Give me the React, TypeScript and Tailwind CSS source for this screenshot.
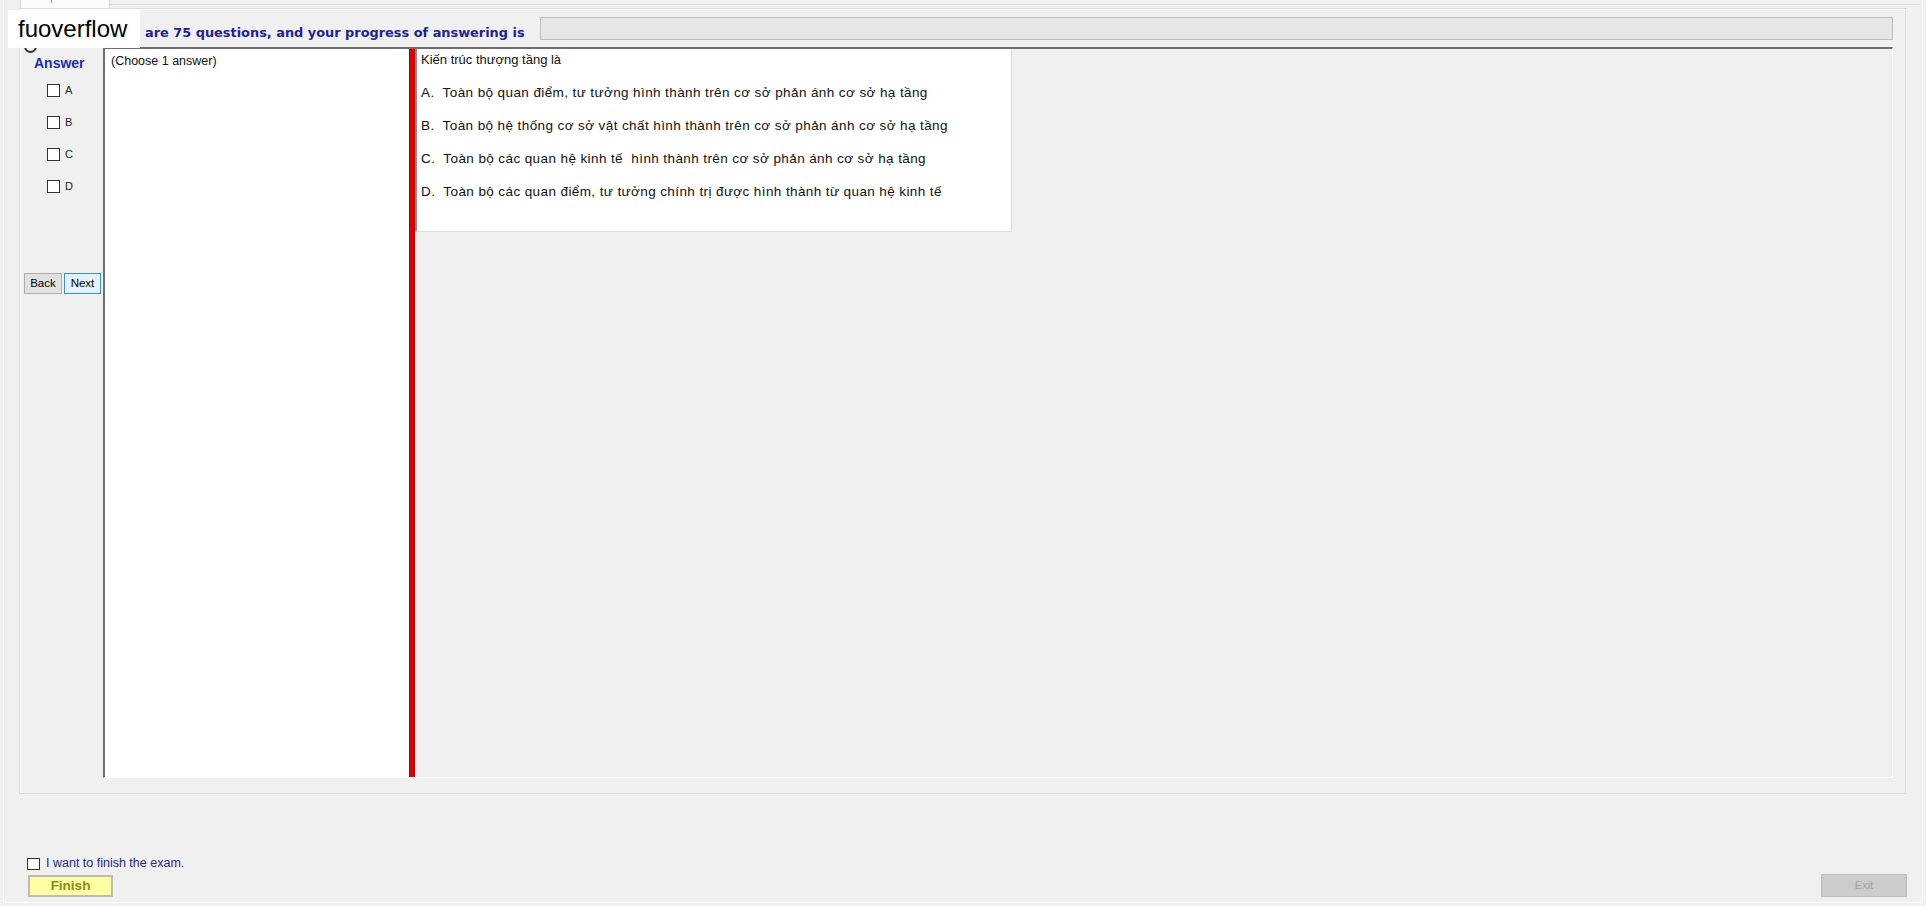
import React from 'react'

const options = [
  'A.  Toàn bộ quan điểm, tư tưởng hình thành trên cơ sở phản ánh cơ sở hạ tầng',
  'B.  Toàn bộ hệ thống cơ sở vật chất hình thành trên cơ sở phản ánh cơ sở hạ tầng',
  'C.  Toàn bộ các quan hệ kinh tế  hình thành trên cơ sở phản ánh cơ sở hạ tầng',
  'D.  Toàn bộ các quan điểm, tư tưởng chính trị được hình thành từ quan hệ kinh tế',
]

function Box() {
  return <span className="block h-[13px] w-[13px] border border-[#333333] bg-white" />
}

export default function App() {
  return (
    <div className="relative h-[906px] w-[1926px] overflow-hidden bg-[#f0f0f0] font-['Liberation_Sans',Arial,sans-serif] text-black">
      <div className="ml-[3px] flex h-[903px] w-[1920px] flex-col border-x border-b border-white">
        {/* tab strip */}
        <div className="flex h-[8px] pl-[16px]">
          <div className="relative h-full w-[90px] border-x border-[#d4d4d4] bg-[#fbfbfb]">
            <span className="absolute left-[30px] top-0 h-[3px] w-[1px] bg-[#9a9a9a]" />
          </div>
          <div className="h-[5px] flex-1 border-b border-[#dedede]" />
        </div>

        {/* tab page */}
        <div className="ml-[15px] flex h-[786px] w-[1887px] flex-col border border-[#dadada] shadow-[inset_1px_1px_0_#ffffff]">
          <div className="flex h-[38px] shrink-0">
            <div className="w-[125px]" />
            <div className="w-[395px] pt-[16px] font-['DejaVu_Sans',Verdana,sans-serif] text-[12.9px] font-bold leading-[15px] text-[#1f1f97]">
              are 75 questions, and your progress of answering is
            </div>
            <div className="mt-[8px] h-[23px] w-[1353px] border border-[#bcbcbc] bg-[#e6e6e6]" />
          </div>

          <div className="flex h-[731px] shrink-0">
            {/* answer column */}
            <div className="flex w-[83px] flex-col pt-[8px]">
              <div className="pl-[14px] text-[14px] font-bold leading-[16px] text-[#1a2db3]">Answer</div>
              <div className="mt-[13px] flex flex-col gap-[19px] pl-[27px]">
                {['A', 'B', 'C', 'D'].map((l) => (
                  <div key={l} className="flex h-[13px] items-center gap-[5px]">
                    <Box />
                    <span className="text-[11px] leading-[13px] text-[#222]">{l}</span>
                  </div>
                ))}
              </div>
              <div className="mt-[80px] flex gap-[2px] pl-[4px]">
                <button className="h-[21px] w-[38px] border border-[#adadad] bg-[#e1e1e1] text-[11.5px] leading-[19px] text-black">
                  Back
                </button>
                <button className="h-[21px] w-[37px] border border-[#3c8fd4] bg-[#e5f1fb] text-[11.5px] leading-[19px] text-black">
                  Next
                </button>
              </div>
            </div>

            {/* sunken container */}
            <div className="flex w-[1790px] border-l-2 border-t-2 border-[#6f6f6f] border-b border-r border-b-white border-r-white">
              <div className="w-[304px] bg-white pl-[6px] pt-[5px] text-[12.5px] leading-[15px] text-[#111]">
                (Choose 1 answer)
              </div>
              <div className="w-[6px] border-x border-[#b00000] bg-[#e40000]" />
              <div className="flex-1 bg-[#f0f0f0]">
                <div className="flex h-[183px] w-[597px] flex-col gap-[17px] border-l-2 border-[#8c8c8c] border-b border-r border-b-[#dcdcdc] border-r-[#dcdcdc] bg-white pl-[4px] pt-[3px] text-[13px] leading-[16px] text-[#111]">
                  <div>Kiến trúc thượng tầng là</div>
                  {options.map((o) => (
                    <div key={o} className="whitespace-pre text-[13.5px] tracking-[0.4px]">{o}</div>
                  ))}
                </div>
              </div>
            </div>
          </div>
        </div>

        {/* footer */}
        <div className="flex flex-1 items-end justify-between pb-[5px]">
          <div className="flex flex-col pl-[23px]">
            <div className="mb-[5px] flex h-[13px] items-center gap-[6px]">
              <span className="block h-[12px] w-[13px] border border-[#333333] bg-white" />
              <span className="text-[12.5px] leading-[13px] text-[#27278a]">I want to finish the exam.</span>
            </div>
            <button className="ml-[1px] h-[22px] w-[85px] border-2 border-[#bcbcb4] bg-[#ffffa6] text-[13.5px] font-bold leading-[18px] text-[#8c8c10]">
              Finish
            </button>
          </div>
          <button className="mr-[15px] h-[23px] w-[86px] border border-[#bdbdbd] bg-[#cccccc] text-[11px] leading-[21px] text-[#a3a3a3]">
            Exit
          </button>
        </div>
      </div>

      {/* watermark over the header */}
      <span className="absolute left-[24px] top-[40px] h-[13px] w-[13px] rounded-full border-2 border-[#333]" />
      <div className="absolute left-[8px] top-[10px] flex h-[38px] w-[132px] items-center bg-white pl-[10px] text-[24px] leading-[28px] text-black">
        fuoverflow
      </div>
    </div>
  )
}
